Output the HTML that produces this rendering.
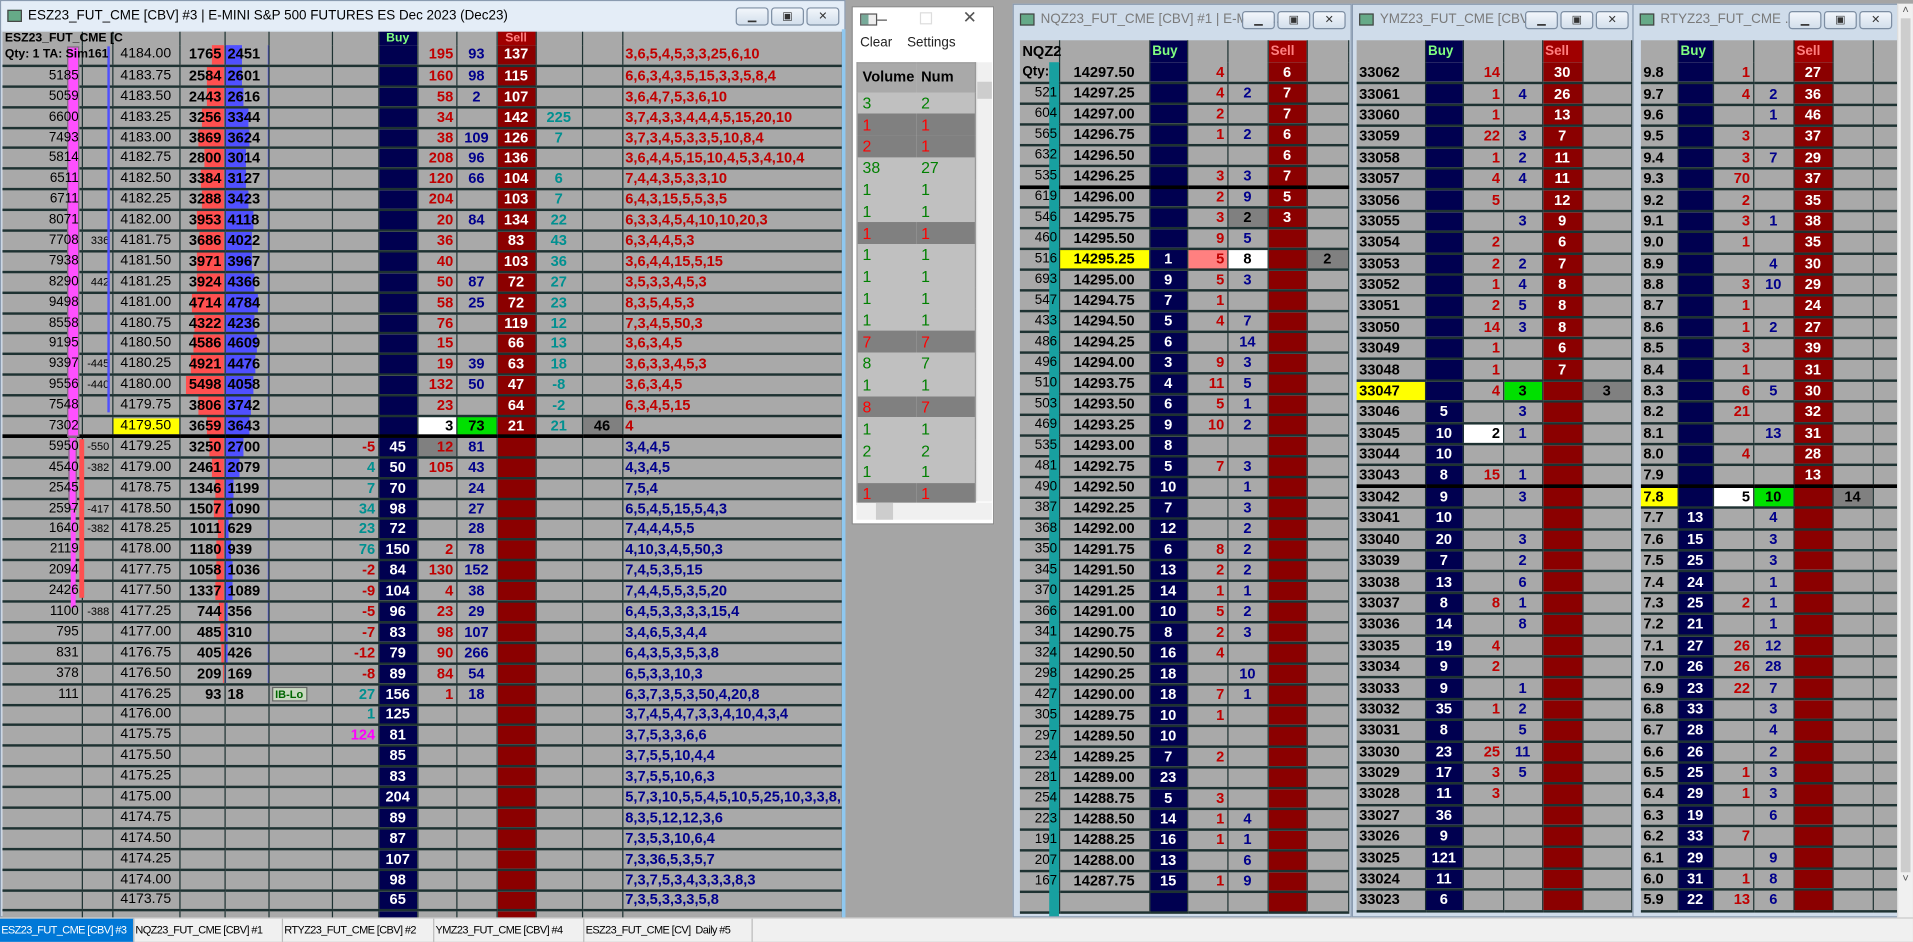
<!DOCTYPE html>
<html><head><meta charset="utf-8"><style>
*{box-sizing:border-box;margin:0;padding:0}
html,body{width:1913px;height:942px;overflow:hidden;background:#ababab}
#root{position:absolute;left:0;top:0;width:1568px;height:772px;transform:scale(1.22);transform-origin:0 0;background:#a5a5a5;font-family:"Liberation Sans",sans-serif}
.frame{position:absolute;background:#cfdcea;border:1px solid #8a9bb0}
.title{position:absolute;left:0;right:0;top:0;height:24px;font-size:11px;line-height:24px;padding-left:22px;white-space:nowrap;overflow:hidden;color:#7a7a7a}
.ico{position:absolute;left:5px;top:7px;width:12px;height:10px;background:#6a8;border:1px solid #444}
.btns{position:absolute;right:4px;top:5px;height:15px;display:flex;gap:2px}
.btns span{width:27px;height:15px;border:1px solid #7d8ea3;border-radius:3px;background:linear-gradient(#f2f6fb,#d3dfec);font-size:9px;text-align:center;line-height:13px;color:#333}
table{position:absolute;border-collapse:collapse;table-layout:fixed;font-weight:bold;font-size:12px;background:#a9a9a9}
td{border-right:1px solid #1e3232;border-bottom:2px solid #1e3232;padding:0 2px;white-space:nowrap;overflow:hidden;line-height:13px}
tr.h td{border-bottom:0}
.r{color:#c00000}.b{color:#00008b}.t{color:#009090}.m{color:#ff00ff}.k{color:#000}
.wc{background:#fff!important;color:#000!important}
.gc{background:#00e000!important;color:#000!important}
.dc{background:#808080!important;color:#000!important}
.pc{background:#ff8080!important}
.yc{background:#ffff00!important}
.thick td{border-bottom:3px solid #000}
.ov{overflow:visible!important;position:relative;z-index:3}
/* ES */
#es tr{height:16.9px}
#es tr.h{height:11px}
#es td:nth-child(1){text-align:right;font-size:11px;font-weight:normal;position:relative;z-index:3;overflow:visible}
#es td:nth-child(2){text-align:right;font-size:9px;font-weight:normal}
#es td:nth-child(3){text-align:center;font-weight:normal;font-size:11.5px}
#es td:nth-child(4){text-align:right;background:linear-gradient(to left,#ff5050 var(--a,0px),#a9a9a9 0)}
#es td:nth-child(5){text-align:left;background:linear-gradient(to right,#5050ff var(--b,0px),#a9a9a9 0)}
#es td:nth-child(7){text-align:right}
#es td:nth-child(8){text-align:center;background:#000050;color:#fff}
#es td:nth-child(9){text-align:right;color:#c00000}
#es td:nth-child(10){text-align:center;color:#00008b}
#es td:nth-child(11){text-align:center;background:#8b0000;color:#fff}
#es td:nth-child(12){text-align:center;color:#009090}
#es td:nth-child(13){text-align:center}
#es td:nth-child(14){text-align:left;color:#00008b}
#es tr.u td:nth-child(14){color:#c00000}
/* small DOMs */
.dm td:nth-child(1){text-align:right;font-size:11px;font-weight:normal}
#nq td:nth-child(1){position:relative;z-index:3;overflow:visible;padding-right:1px}
.dm td.p{text-align:center}
.dm td.bu{text-align:center;background:#000050;color:#fff}
.dm td.c3{text-align:right;color:#c00000}
.dm td.c4{text-align:center;color:#00008b}
.dm td.se{text-align:center;background:#8b0000;color:#fff}
.dm td.c6{text-align:center}
#nq tr{height:17px}#nq tr.h{height:18px}
#ym tr,#rt tr{height:17.4px}#ym tr.h,#rt tr.h{height:18px}
.hb{background:#000050!important;color:#80ff80!important;font-size:11px;vertical-align:middle}
.hs{background:#a00000!important;color:#ff8080!important;font-size:11px}
#ym td:nth-child(1),#rt td:nth-child(1){text-align:left;font-size:12px;font-weight:bold}
/* volume window */
#vw{position:absolute;left:698px;top:5px;width:117px;height:425px;background:#fff;border:1px solid #888}
#vt{position:absolute;left:3px;top:45px;width:98px;border:1px solid #999;font-weight:bold;font-size:12px;border-collapse:collapse;background:#c0c0c0}
#vt td{border:0;height:17.8px;padding:0 0 0 4px;font-weight:normal;font-size:13px}
#vt tr.d td{background:#808080;color:#ff0000}
#vt tr.g td{color:#008000}
#tabs{position:absolute;left:0;top:752px;width:1568px;height:20px;background:#f0f0f0;border-top:1px solid #ccc;font-size:9px;letter-spacing:-0.5px;white-space:nowrap}
#tabs span{position:absolute;top:0;height:19px;line-height:19px;padding-left:1px;border-right:1px solid #bbb;color:#000;overflow:hidden}
</style></head><body><div id="root">

<!-- ES window -->
<div class="frame" style="left:0;top:0;width:693px;height:752px;background:#dce7f3">
<div class="title" style="color:#000;background:#e4edf7"><div class="ico"></div>ESZ23_FUT_CME [CBV] #3 | E-MINI S&amp;P 500 FUTURES ES Dec 2023 (Dec23)</div>
<div class="btns"><span>▁</span><span>▣</span><span>✕</span></div>
</div>
<table id="es" style="left:2px;top:26px;width:688px">
<colgroup><col style="width:65px"><col style="width:25px"><col style="width:55px"><col style="width:37px"><col style="width:36px"><col style="width:52px"><col style="width:38px"><col style="width:32px"><col style="width:32px"><col style="width:33px"><col style="width:32px"><col style="width:38px"><col style="width:33px"><col style="width:180px"></colgroup>
<tr class="h"><td style="text-align:left;font-size:10px;font-weight:bold;line-height:10px;overflow:visible">ESZ23_FUT_CME [C</td><td></td><td></td><td></td><td></td><td></td><td></td><td class="hb" style="font-size:10px;line-height:10px">Buy</td><td></td><td></td><td class="hs" style="font-size:10px;line-height:10px">Sell</td><td></td><td></td><td></td></tr>
<tr class="u" style="--a:10px;--b:14px"><td style="text-align:left;font-size:10px;font-weight:bold">Qty: 1 TA: Sim161</td><td></td><td>4184.00</td><td>1765</td><td>2451</td><td></td><td></td><td></td><td>195</td><td>93</td><td>137</td><td></td><td></td><td>3,6,5,4,5,3,3,25,6,10</td></tr>
<tr class="u" style="--a:14px;--b:14px"><td>5185</td><td></td><td>4183.75</td><td>2584</td><td>2601</td><td></td><td></td><td></td><td>160</td><td>98</td><td>115</td><td></td><td></td><td>6,6,3,4,3,5,15,3,3,5,8,4</td></tr>
<tr class="u" style="--a:14px;--b:15px"><td>5059</td><td></td><td>4183.50</td><td>2443</td><td>2616</td><td></td><td></td><td></td><td>58</td><td>2</td><td>107</td><td></td><td></td><td>3,6,4,7,5,3,6,10</td></tr>
<tr class="u" style="--a:18px;--b:19px"><td>6600</td><td></td><td>4183.25</td><td>3256</td><td>3344</td><td></td><td></td><td></td><td>34</td><td></td><td>142</td><td class="m">225</td><td></td><td>3,7,4,3,3,4,4,4,5,15,20,10</td></tr>
<tr class="u" style="--a:21px;--b:20px"><td>7493</td><td></td><td>4183.00</td><td>3869</td><td>3624</td><td></td><td></td><td></td><td>38</td><td>109</td><td>126</td><td>7</td><td></td><td>3,7,3,4,5,3,3,5,10,8,4</td></tr>
<tr class="u" style="--a:16px;--b:17px"><td>5814</td><td></td><td>4182.75</td><td>2800</td><td>3014</td><td></td><td></td><td></td><td>208</td><td>96</td><td>136</td><td></td><td></td><td>3,6,4,4,5,15,10,4,5,3,4,10,4</td></tr>
<tr class="u" style="--a:19px;--b:17px"><td>6511</td><td></td><td>4182.50</td><td>3384</td><td>3127</td><td></td><td></td><td></td><td>120</td><td>66</td><td>104</td><td>6</td><td></td><td>7,4,4,3,5,3,3,10</td></tr>
<tr class="u" style="--a:18px;--b:19px"><td>6711</td><td></td><td>4182.25</td><td>3288</td><td>3423</td><td></td><td></td><td></td><td>204</td><td></td><td>103</td><td>7</td><td></td><td>6,4,3,15,5,5,3,5</td></tr>
<tr class="u" style="--a:22px;--b:23px"><td>8071</td><td></td><td>4182.00</td><td>3953</td><td>4118</td><td></td><td></td><td></td><td>20</td><td>84</td><td>134</td><td>22</td><td></td><td>6,3,3,4,5,4,10,10,20,3</td></tr>
<tr class="u" style="--a:20px;--b:22px"><td>7708</td><td>336</td><td>4181.75</td><td>3686</td><td>4022</td><td></td><td></td><td></td><td>36</td><td></td><td>83</td><td>43</td><td></td><td>6,3,4,4,5,3</td></tr>
<tr class="u" style="--a:22px;--b:22px"><td>7938</td><td></td><td>4181.50</td><td>3971</td><td>3967</td><td></td><td></td><td></td><td>40</td><td></td><td>103</td><td>36</td><td></td><td>3,6,4,4,15,5,15</td></tr>
<tr class="u" style="--a:22px;--b:24px"><td>8290</td><td>442</td><td>4181.25</td><td>3924</td><td>4366</td><td></td><td></td><td></td><td>50</td><td>87</td><td>72</td><td>27</td><td></td><td>3,5,3,3,4,5,3</td></tr>
<tr class="u" style="--a:26px;--b:27px"><td>9498</td><td></td><td>4181.00</td><td>4714</td><td>4784</td><td></td><td></td><td></td><td>58</td><td>25</td><td>72</td><td>23</td><td></td><td>8,3,5,4,5,3</td></tr>
<tr class="u" style="--a:24px;--b:24px"><td>8558</td><td></td><td>4180.75</td><td>4322</td><td>4236</td><td></td><td></td><td></td><td>76</td><td></td><td>119</td><td>12</td><td></td><td>7,3,4,5,50,3</td></tr>
<tr class="u" style="--a:25px;--b:26px"><td>9195</td><td></td><td>4180.50</td><td>4586</td><td>4609</td><td></td><td></td><td></td><td>15</td><td></td><td>66</td><td>13</td><td></td><td>3,6,3,4,5</td></tr>
<tr class="u" style="--a:27px;--b:25px"><td>9397</td><td>-445</td><td>4180.25</td><td>4921</td><td>4476</td><td></td><td></td><td></td><td>19</td><td>39</td><td>63</td><td>18</td><td></td><td>3,6,3,3,4,5,3</td></tr>
<tr class="u" style="--a:31px;--b:23px"><td>9556</td><td>-440</td><td>4180.00</td><td>5498</td><td>4058</td><td></td><td></td><td></td><td>132</td><td>50</td><td>47</td><td class="r">-8</td><td></td><td>3,6,3,4,5</td></tr>
<tr class="u" style="--a:21px;--b:21px"><td>7548</td><td></td><td>4179.75</td><td>3806</td><td>3742</td><td></td><td></td><td></td><td>23</td><td></td><td>64</td><td class="r">-2</td><td></td><td>6,3,4,5,15</td></tr>
<tr class="u thick" style="--a:14px;--b:20px"><td>7302</td><td></td><td><span style="display:block;background:#ff0;margin:0 -2px">4179.50</span></td><td>3659</td><td>3643</td><td></td><td></td><td></td><td class="wc">3</td><td class="gc">73</td><td>21</td><td>21</td><td class="dc">46</td><td>4</td></tr>
<tr style="--a:12px;--b:15px"><td>5950</td><td>-550</td><td>4179.25</td><td>3250</td><td>2700</td><td></td><td class="r">-5</td><td>45</td><td class="dc" style="color:#c00000!important">12</td><td>81</td><td></td><td></td><td></td><td>3,4,4,5</td></tr>
<tr style="--a:10px;--b:12px"><td>4540</td><td>-382</td><td>4179.00</td><td>2461</td><td>2079</td><td></td><td class="t">4</td><td>50</td><td>105</td><td>43</td><td></td><td></td><td></td><td>4,3,4,5</td></tr>
<tr style="--a:7px;--b:7px"><td>2545</td><td></td><td>4178.75</td><td>1346</td><td>1199</td><td></td><td class="t">7</td><td>70</td><td></td><td>24</td><td></td><td></td><td></td><td>7,5,4</td></tr>
<tr style="--a:8px;--b:6px"><td>2597</td><td>-417</td><td>4178.50</td><td>1507</td><td>1090</td><td></td><td class="t">34</td><td>98</td><td></td><td>27</td><td></td><td></td><td></td><td>6,5,4,5,15,5,4,3</td></tr>
<tr style="--a:5px;--b:3px"><td>1640</td><td>-382</td><td>4178.25</td><td>1011</td><td>629</td><td></td><td class="t">23</td><td>72</td><td></td><td>28</td><td></td><td></td><td></td><td>7,4,4,4,5,5</td></tr>
<tr style="--a:6px;--b:5px"><td>2119</td><td></td><td>4178.00</td><td>1180</td><td>939</td><td></td><td class="t">76</td><td>150</td><td>2</td><td>78</td><td></td><td></td><td></td><td>4,10,3,4,5,50,3</td></tr>
<tr style="--a:6px;--b:6px"><td>2094</td><td></td><td>4177.75</td><td>1058</td><td>1036</td><td></td><td class="r">-2</td><td>84</td><td>130</td><td>152</td><td></td><td></td><td></td><td>7,4,5,3,5,15</td></tr>
<tr style="--a:7px;--b:6px"><td>2426</td><td></td><td>4177.50</td><td>1337</td><td>1089</td><td></td><td class="r">-9</td><td>104</td><td>4</td><td>38</td><td></td><td></td><td></td><td>7,4,4,5,5,3,5,20</td></tr>
<tr style="--a:4px;--b:2px"><td>1100</td><td>-388</td><td>4177.25</td><td>744</td><td>356</td><td></td><td class="r">-5</td><td>96</td><td>23</td><td>29</td><td></td><td></td><td></td><td>6,4,5,3,3,3,3,15,4</td></tr>
<tr style="--a:3px;--b:2px"><td>795</td><td></td><td>4177.00</td><td>485</td><td>310</td><td></td><td class="r">-7</td><td>83</td><td>98</td><td>107</td><td></td><td></td><td></td><td>3,4,6,5,3,4,4</td></tr>
<tr style="--a:2px;--b:2px"><td>831</td><td></td><td>4176.75</td><td>405</td><td>426</td><td></td><td class="r">-12</td><td>79</td><td>90</td><td>266</td><td></td><td></td><td></td><td>6,4,3,5,3,5,3,8</td></tr>
<tr style="--a:1px;--b:1px"><td>378</td><td></td><td>4176.50</td><td>209</td><td>169</td><td></td><td class="r">-8</td><td>89</td><td>84</td><td>54</td><td></td><td></td><td></td><td>6,5,3,3,10,3</td></tr>
<tr><td>111</td><td></td><td>4176.25</td><td>93</td><td>18</td><td><span style="font-size:9px;color:#060;background:#c8d8c0;border:1px solid #666;padding:0 2px">IB-Lo</span></td><td class="t">27</td><td>156</td><td>1</td><td>18</td><td></td><td></td><td></td><td>6,3,7,3,5,3,50,4,20,8</td></tr>
<tr><td></td><td></td><td>4176.00</td><td></td><td></td><td></td><td class="t">1</td><td>125</td><td></td><td></td><td></td><td></td><td></td><td>3,7,4,5,4,7,3,3,4,10,4,3,4</td></tr>
<tr><td></td><td></td><td>4175.75</td><td></td><td></td><td></td><td class="m">124</td><td>81</td><td></td><td></td><td></td><td></td><td></td><td>3,7,5,3,3,6,6</td></tr>
<tr><td></td><td></td><td>4175.50</td><td></td><td></td><td></td><td></td><td>85</td><td></td><td></td><td></td><td></td><td></td><td>3,7,5,5,10,4,4</td></tr>
<tr><td></td><td></td><td>4175.25</td><td></td><td></td><td></td><td></td><td>83</td><td></td><td></td><td></td><td></td><td></td><td>3,7,5,5,10,6,3</td></tr>
<tr><td></td><td></td><td>4175.00</td><td></td><td></td><td></td><td></td><td>204</td><td></td><td></td><td></td><td></td><td></td><td>5,7,3,10,5,5,4,5,10,5,25,10,3,3,8,</td></tr>
<tr><td></td><td></td><td>4174.75</td><td></td><td></td><td></td><td></td><td>89</td><td></td><td></td><td></td><td></td><td></td><td>8,3,5,12,12,3,6</td></tr>
<tr><td></td><td></td><td>4174.50</td><td></td><td></td><td></td><td></td><td>87</td><td></td><td></td><td></td><td></td><td></td><td>7,3,5,3,10,6,4</td></tr>
<tr><td></td><td></td><td>4174.25</td><td></td><td></td><td></td><td></td><td>107</td><td></td><td></td><td></td><td></td><td></td><td>7,3,36,5,3,5,7</td></tr>
<tr><td></td><td></td><td>4174.00</td><td></td><td></td><td></td><td></td><td>98</td><td></td><td></td><td></td><td></td><td></td><td>7,3,7,5,3,4,3,3,3,8,3</td></tr>
<tr><td></td><td></td><td>4173.75</td><td></td><td></td><td></td><td></td><td>65</td><td></td><td></td><td></td><td></td><td></td><td>7,3,5,3,3,3,5,8</td></tr>
<tr><td></td><td></td><td></td><td></td><td></td><td></td><td></td><td></td><td></td><td></td><td></td><td></td><td></td><td></td></tr>
</table>
<!-- ES overlays -->
<div style="position:absolute;z-index:1;left:55px;top:38px;width:10px;height:320px;background:#ff50ff;border:1px solid #777"></div>
<div style="position:absolute;z-index:1;left:56px;top:358px;width:7px;height:60px;background:#ff50ff;border:1px solid #777"></div>
<div style="position:absolute;z-index:1;left:58px;top:418px;width:4px;height:80px;background:#ff50ff"></div>
<div style="position:absolute;z-index:1;left:65px;top:360px;width:4px;height:130px;background:#ff5050"></div>
<div style="position:absolute;z-index:1;left:88px;top:38px;width:2px;height:300px;background:#5050ff"></div>
<div style="position:absolute;left:690px;top:24px;width:3px;height:728px;background:#8fc8f0"></div>

<!-- Volume window -->
<div id="vw">
<div style="position:absolute;left:6px;top:5px;width:14px;height:10px;border:1px solid #555;background:linear-gradient(90deg,#7a9 50%,#eee 50%)"></div>
<div style="position:absolute;left:20px;top:10px;width:8px;height:1px;background:#555"></div>
<div style="position:absolute;left:55px;top:4px;width:10px;height:10px;border:1px solid #ddd"></div>
<div style="position:absolute;left:90px;top:0px;font-size:14px;color:#555">✕</div>
<div style="position:absolute;left:6px;top:23px;font-size:11px;color:#222">Clear &nbsp;&nbsp; Settings</div>
<table id="vt">
<tr style="background:#a9a9a9"><td style="font-weight:bold;height:24px;color:#000;font-size:12px">Volume</td><td style="font-weight:bold;color:#000;font-size:12px">Num</td></tr>
<tr class="g"><td>3</td><td>2</td></tr>
<tr class="d"><td>1</td><td>1</td></tr>
<tr class="d"><td>2</td><td>1</td></tr>
<tr class="g"><td>38</td><td>27</td></tr>
<tr class="g"><td>1</td><td>1</td></tr>
<tr class="g"><td>1</td><td>1</td></tr>
<tr class="d"><td>1</td><td>1</td></tr>
<tr class="g"><td>1</td><td>1</td></tr>
<tr class="g"><td>1</td><td>1</td></tr>
<tr class="g"><td>1</td><td>1</td></tr>
<tr class="g"><td>1</td><td>1</td></tr>
<tr class="d"><td>7</td><td>7</td></tr>
<tr class="g"><td>8</td><td>7</td></tr>
<tr class="g"><td>1</td><td>1</td></tr>
<tr class="d"><td>8</td><td>7</td></tr>
<tr class="g"><td>1</td><td>1</td></tr>
<tr class="g"><td>2</td><td>2</td></tr>
<tr class="g"><td>1</td><td>1</td></tr>
<tr class="d"><td>1</td><td>1</td></tr>
</table>
<div style="position:absolute;left:101px;top:45px;width:13px;height:360px;background:#f0f0f0;border-left:1px solid #ddd"><div style="margin-top:16px;height:14px;background:#cdcdcd"></div></div>
<div style="position:absolute;left:3px;top:406px;width:111px;height:14px;background:#f0f0f0"><div style="margin-left:16px;width:14px;height:14px;background:#cdcdcd"></div></div>
</div>

<!-- NQ window -->
<div class="frame" style="left:830px;top:3px;width:278px;height:749px">
<div class="title"><div class="ico"></div>NQZ23_FUT_CME [CBV] #1 | E-MINI ...</div>
<div class="btns"><span>▁</span><span>▣</span><span>✕</span></div>
</div>
<table id="nq" class="dm" style="left:836px;top:33px;width:269px">
<colgroup><col style="width:32px"><col style="width:74px"><col style="width:31px"><col style="width:33px"><col style="width:33px"><col style="width:32px"><col style="width:34px"></colgroup>
<tr class="h"><td style="text-align:left;font-weight:bold;font-size:12px">NQZ2</td><td></td><td class="hb">Buy</td><td></td><td></td><td class="hs">Sell</td><td></td></tr>
<tr><td style="text-align:left;font-weight:bold">Qty:</td><td class="p">14297.50</td><td class="bu"></td><td class="c3">4</td><td class="c4"></td><td class="se">6</td><td></td></tr>
<tr><td>521</td><td class="p">14297.25</td><td class="bu"></td><td class="c3">4</td><td class="c4">2</td><td class="se">7</td><td></td></tr>
<tr><td>604</td><td class="p">14297.00</td><td class="bu"></td><td class="c3">2</td><td class="c4"></td><td class="se">7</td><td></td></tr>
<tr><td>565</td><td class="p">14296.75</td><td class="bu"></td><td class="c3">1</td><td class="c4">2</td><td class="se">6</td><td></td></tr>
<tr><td>632</td><td class="p">14296.50</td><td class="bu"></td><td class="c3"></td><td class="c4"></td><td class="se">6</td><td></td></tr>
<tr class="thick"><td>535</td><td class="p">14296.25</td><td class="bu"></td><td class="c3">3</td><td class="c4">3</td><td class="se">7</td><td></td></tr>
<tr><td>619</td><td class="p">14296.00</td><td class="bu"></td><td class="c3">2</td><td class="c4">9</td><td class="se">5</td><td></td></tr>
<tr><td>546</td><td class="p">14295.75</td><td class="bu"></td><td class="c3">3</td><td class="c4 dc">2</td><td class="se">3</td><td></td></tr>
<tr><td>460</td><td class="p">14295.50</td><td class="bu"></td><td class="c3">9</td><td class="c4">5</td><td class="se"></td><td></td></tr>
<tr><td>516</td><td class="p yc">14295.25</td><td class="bu">1</td><td class="c3 pc">5</td><td class="c4 wc">8</td><td class="se"></td><td class="dc c6">2</td></tr>
<tr><td>693</td><td class="p">14295.00</td><td class="bu">9</td><td class="c3">5</td><td class="c4">3</td><td class="se"></td><td></td></tr>
<tr><td>547</td><td class="p">14294.75</td><td class="bu">7</td><td class="c3">1</td><td class="c4"></td><td class="se"></td><td></td></tr>
<tr><td>433</td><td class="p">14294.50</td><td class="bu">5</td><td class="c3">4</td><td class="c4">7</td><td class="se"></td><td></td></tr>
<tr><td>486</td><td class="p">14294.25</td><td class="bu">6</td><td class="c3"></td><td class="c4">14</td><td class="se"></td><td></td></tr>
<tr><td>496</td><td class="p">14294.00</td><td class="bu">3</td><td class="c3">9</td><td class="c4">3</td><td class="se"></td><td></td></tr>
<tr><td>510</td><td class="p">14293.75</td><td class="bu">4</td><td class="c3">11</td><td class="c4">5</td><td class="se"></td><td></td></tr>
<tr><td>503</td><td class="p">14293.50</td><td class="bu">6</td><td class="c3">5</td><td class="c4">1</td><td class="se"></td><td></td></tr>
<tr><td>469</td><td class="p">14293.25</td><td class="bu">9</td><td class="c3">10</td><td class="c4">2</td><td class="se"></td><td></td></tr>
<tr><td>535</td><td class="p">14293.00</td><td class="bu">8</td><td class="c3"></td><td class="c4"></td><td class="se"></td><td></td></tr>
<tr><td>481</td><td class="p">14292.75</td><td class="bu">5</td><td class="c3">7</td><td class="c4">3</td><td class="se"></td><td></td></tr>
<tr><td>490</td><td class="p">14292.50</td><td class="bu">10</td><td class="c3"></td><td class="c4">1</td><td class="se"></td><td></td></tr>
<tr><td>387</td><td class="p">14292.25</td><td class="bu">7</td><td class="c3"></td><td class="c4">3</td><td class="se"></td><td></td></tr>
<tr><td>368</td><td class="p">14292.00</td><td class="bu">12</td><td class="c3"></td><td class="c4">2</td><td class="se"></td><td></td></tr>
<tr><td>350</td><td class="p">14291.75</td><td class="bu">6</td><td class="c3">8</td><td class="c4">2</td><td class="se"></td><td></td></tr>
<tr><td>345</td><td class="p">14291.50</td><td class="bu">13</td><td class="c3">2</td><td class="c4">2</td><td class="se"></td><td></td></tr>
<tr><td>370</td><td class="p">14291.25</td><td class="bu">14</td><td class="c3">1</td><td class="c4">1</td><td class="se"></td><td></td></tr>
<tr><td>366</td><td class="p">14291.00</td><td class="bu">10</td><td class="c3">5</td><td class="c4">2</td><td class="se"></td><td></td></tr>
<tr><td>341</td><td class="p">14290.75</td><td class="bu">8</td><td class="c3">2</td><td class="c4">3</td><td class="se"></td><td></td></tr>
<tr><td>324</td><td class="p">14290.50</td><td class="bu">16</td><td class="c3">4</td><td class="c4"></td><td class="se"></td><td></td></tr>
<tr><td>298</td><td class="p">14290.25</td><td class="bu">18</td><td class="c3"></td><td class="c4">10</td><td class="se"></td><td></td></tr>
<tr><td>427</td><td class="p">14290.00</td><td class="bu">18</td><td class="c3">7</td><td class="c4">1</td><td class="se"></td><td></td></tr>
<tr><td>305</td><td class="p">14289.75</td><td class="bu">10</td><td class="c3">1</td><td class="c4"></td><td class="se"></td><td></td></tr>
<tr><td>297</td><td class="p">14289.50</td><td class="bu">10</td><td class="c3"></td><td class="c4"></td><td class="se"></td><td></td></tr>
<tr><td>234</td><td class="p">14289.25</td><td class="bu">7</td><td class="c3">2</td><td class="c4"></td><td class="se"></td><td></td></tr>
<tr><td>281</td><td class="p">14289.00</td><td class="bu">23</td><td class="c3"></td><td class="c4"></td><td class="se"></td><td></td></tr>
<tr><td>254</td><td class="p">14288.75</td><td class="bu">5</td><td class="c3">3</td><td class="c4"></td><td class="se"></td><td></td></tr>
<tr><td>223</td><td class="p">14288.50</td><td class="bu">14</td><td class="c3">1</td><td class="c4">4</td><td class="se"></td><td></td></tr>
<tr><td>191</td><td class="p">14288.25</td><td class="bu">16</td><td class="c3">1</td><td class="c4">1</td><td class="se"></td><td></td></tr>
<tr><td>207</td><td class="p">14288.00</td><td class="bu">13</td><td class="c3"></td><td class="c4">6</td><td class="se"></td><td></td></tr>
<tr><td>167</td><td class="p">14287.75</td><td class="bu">15</td><td class="c3">1</td><td class="c4">9</td><td class="se"></td><td></td></tr>
<tr><td></td><td class="p"></td><td class="bu"></td><td></td><td></td><td class="se"></td><td></td></tr>
</table>
<div style="position:absolute;z-index:1;left:860px;top:51px;width:8px;height:700px;background:#18a0a0"></div>

<!-- YM window -->
<div class="frame" style="left:1108px;top:3px;width:232px;height:749px">
<div class="title"><div class="ico"></div>YMZ23_FUT_CME [CBV]...</div>
<div class="btns"><span>▁</span><span>▣</span><span>✕</span></div>
</div>
<table id="ym" class="dm" style="left:1112px;top:33px;width:225px">
<colgroup><col style="width:56px"><col style="width:31px"><col style="width:33px"><col style="width:32px"><col style="width:33px"><col style="width:40px"></colgroup>
<tr class="h"><td></td><td class="hb">Buy</td><td></td><td></td><td class="hs">Sell</td><td></td></tr>
<tr><td>33062</td><td class="bu"></td><td class="c3">14</td><td class="c4"></td><td class="se">30</td><td></td></tr>
<tr><td>33061</td><td class="bu"></td><td class="c3">1</td><td class="c4">4</td><td class="se">26</td><td></td></tr>
<tr><td>33060</td><td class="bu"></td><td class="c3">1</td><td class="c4"></td><td class="se">13</td><td></td></tr>
<tr><td>33059</td><td class="bu"></td><td class="c3">22</td><td class="c4">3</td><td class="se">7</td><td></td></tr>
<tr><td>33058</td><td class="bu"></td><td class="c3">1</td><td class="c4">2</td><td class="se">11</td><td></td></tr>
<tr><td>33057</td><td class="bu"></td><td class="c3">4</td><td class="c4">4</td><td class="se">11</td><td></td></tr>
<tr><td>33056</td><td class="bu"></td><td class="c3">5</td><td class="c4"></td><td class="se">12</td><td></td></tr>
<tr><td>33055</td><td class="bu"></td><td class="c3"></td><td class="c4">3</td><td class="se">9</td><td></td></tr>
<tr><td>33054</td><td class="bu"></td><td class="c3">2</td><td class="c4"></td><td class="se">6</td><td></td></tr>
<tr><td>33053</td><td class="bu"></td><td class="c3">2</td><td class="c4">2</td><td class="se">7</td><td></td></tr>
<tr><td>33052</td><td class="bu"></td><td class="c3">1</td><td class="c4">4</td><td class="se">8</td><td></td></tr>
<tr><td>33051</td><td class="bu"></td><td class="c3">2</td><td class="c4">5</td><td class="se">8</td><td></td></tr>
<tr><td>33050</td><td class="bu"></td><td class="c3">14</td><td class="c4">3</td><td class="se">8</td><td></td></tr>
<tr><td>33049</td><td class="bu"></td><td class="c3">1</td><td class="c4"></td><td class="se">6</td><td></td></tr>
<tr><td>33048</td><td class="bu"></td><td class="c3">1</td><td class="c4"></td><td class="se">7</td><td></td></tr>
<tr><td class="yc">33047</td><td class="bu"></td><td class="c3">4</td><td class="c4 gc">3</td><td class="se"></td><td class="dc c6">3</td></tr>
<tr><td>33046</td><td class="bu">5</td><td class="c3"></td><td class="c4">3</td><td class="se"></td><td></td></tr>
<tr><td>33045</td><td class="bu">10</td><td class="c3 wc">2</td><td class="c4">1</td><td class="se"></td><td></td></tr>
<tr><td>33044</td><td class="bu">10</td><td class="c3"></td><td class="c4"></td><td class="se"></td><td></td></tr>
<tr class="thick"><td>33043</td><td class="bu">8</td><td class="c3">15</td><td class="c4">1</td><td class="se"></td><td></td></tr>
<tr><td>33042</td><td class="bu">9</td><td class="c3"></td><td class="c4">3</td><td class="se"></td><td></td></tr>
<tr><td>33041</td><td class="bu">10</td><td class="c3"></td><td class="c4"></td><td class="se"></td><td></td></tr>
<tr><td>33040</td><td class="bu">20</td><td class="c3"></td><td class="c4">3</td><td class="se"></td><td></td></tr>
<tr><td>33039</td><td class="bu">7</td><td class="c3"></td><td class="c4">2</td><td class="se"></td><td></td></tr>
<tr><td>33038</td><td class="bu">13</td><td class="c3"></td><td class="c4">6</td><td class="se"></td><td></td></tr>
<tr><td>33037</td><td class="bu">8</td><td class="c3">8</td><td class="c4">1</td><td class="se"></td><td></td></tr>
<tr><td>33036</td><td class="bu">14</td><td class="c3"></td><td class="c4">8</td><td class="se"></td><td></td></tr>
<tr><td>33035</td><td class="bu">19</td><td class="c3">4</td><td class="c4"></td><td class="se"></td><td></td></tr>
<tr><td>33034</td><td class="bu">9</td><td class="c3">2</td><td class="c4"></td><td class="se"></td><td></td></tr>
<tr><td>33033</td><td class="bu">9</td><td class="c3"></td><td class="c4">1</td><td class="se"></td><td></td></tr>
<tr><td>33032</td><td class="bu">35</td><td class="c3">1</td><td class="c4">2</td><td class="se"></td><td></td></tr>
<tr><td>33031</td><td class="bu">8</td><td class="c3"></td><td class="c4">5</td><td class="se"></td><td></td></tr>
<tr><td>33030</td><td class="bu">23</td><td class="c3">25</td><td class="c4">11</td><td class="se"></td><td></td></tr>
<tr><td>33029</td><td class="bu">17</td><td class="c3">3</td><td class="c4">5</td><td class="se"></td><td></td></tr>
<tr><td>33028</td><td class="bu">11</td><td class="c3">3</td><td class="c4"></td><td class="se"></td><td></td></tr>
<tr><td>33027</td><td class="bu">36</td><td class="c3"></td><td class="c4"></td><td class="se"></td><td></td></tr>
<tr><td>33026</td><td class="bu">9</td><td class="c3"></td><td class="c4"></td><td class="se"></td><td></td></tr>
<tr><td>33025</td><td class="bu">121</td><td class="c3"></td><td class="c4"></td><td class="se"></td><td></td></tr>
<tr><td>33024</td><td class="bu">11</td><td class="c3"></td><td class="c4"></td><td class="se"></td><td></td></tr>
<tr><td>33023</td><td class="bu">6</td><td class="c3"></td><td class="c4"></td><td class="se"></td><td></td></tr>
</table>

<!-- RTY window -->
<div class="frame" style="left:1338px;top:3px;width:218px;height:749px">
<div class="title"><div class="ico"></div>RTYZ23_FUT_CME ...</div>
<div class="btns"><span>▁</span><span>▣</span><span>✕</span></div>
</div>
<table id="rt" class="dm" style="left:1345px;top:33px;width:210px">
<colgroup><col style="width:30px"><col style="width:29px"><col style="width:33px"><col style="width:33px"><col style="width:32px"><col style="width:33px"><col style="width:20px"></colgroup>
<tr class="h"><td></td><td class="hb">Buy</td><td></td><td></td><td class="hs">Sell</td><td></td><td></td></tr>
<tr><td>9.8</td><td class="bu"></td><td class="c3">1</td><td class="c4"></td><td class="se">27</td><td></td><td></td></tr>
<tr><td>9.7</td><td class="bu"></td><td class="c3">4</td><td class="c4">2</td><td class="se">36</td><td></td><td></td></tr>
<tr><td>9.6</td><td class="bu"></td><td class="c3"></td><td class="c4">1</td><td class="se">46</td><td></td><td></td></tr>
<tr><td>9.5</td><td class="bu"></td><td class="c3">3</td><td class="c4"></td><td class="se">37</td><td></td><td></td></tr>
<tr><td>9.4</td><td class="bu"></td><td class="c3">3</td><td class="c4">7</td><td class="se">29</td><td></td><td></td></tr>
<tr><td>9.3</td><td class="bu"></td><td class="c3">70</td><td class="c4"></td><td class="se">37</td><td></td><td></td></tr>
<tr><td>9.2</td><td class="bu"></td><td class="c3">2</td><td class="c4"></td><td class="se">35</td><td></td><td></td></tr>
<tr><td>9.1</td><td class="bu"></td><td class="c3">3</td><td class="c4">1</td><td class="se">38</td><td></td><td></td></tr>
<tr><td>9.0</td><td class="bu"></td><td class="c3">1</td><td class="c4"></td><td class="se">35</td><td></td><td></td></tr>
<tr><td>8.9</td><td class="bu"></td><td class="c3"></td><td class="c4">4</td><td class="se">30</td><td></td><td></td></tr>
<tr><td>8.8</td><td class="bu"></td><td class="c3">3</td><td class="c4">10</td><td class="se">29</td><td></td><td></td></tr>
<tr><td>8.7</td><td class="bu"></td><td class="c3">1</td><td class="c4"></td><td class="se">24</td><td></td><td></td></tr>
<tr><td>8.6</td><td class="bu"></td><td class="c3">1</td><td class="c4">2</td><td class="se">27</td><td></td><td></td></tr>
<tr><td>8.5</td><td class="bu"></td><td class="c3">3</td><td class="c4"></td><td class="se">39</td><td></td><td></td></tr>
<tr><td>8.4</td><td class="bu"></td><td class="c3">1</td><td class="c4"></td><td class="se">31</td><td></td><td></td></tr>
<tr><td>8.3</td><td class="bu"></td><td class="c3">6</td><td class="c4">5</td><td class="se">30</td><td></td><td></td></tr>
<tr><td>8.2</td><td class="bu"></td><td class="c3">21</td><td class="c4"></td><td class="se">32</td><td></td><td></td></tr>
<tr><td>8.1</td><td class="bu"></td><td class="c3"></td><td class="c4">13</td><td class="se">31</td><td></td><td></td></tr>
<tr><td>8.0</td><td class="bu"></td><td class="c3">4</td><td class="c4"></td><td class="se">28</td><td></td><td></td></tr>
<tr class="thick"><td>7.9</td><td class="bu"></td><td class="c3"></td><td class="c4"></td><td class="se">13</td><td></td><td></td></tr>
<tr><td class="yc">7.8</td><td class="bu"></td><td class="c3 wc">5</td><td class="c4 gc">10</td><td class="se"></td><td class="dc c6">14</td><td></td></tr>
<tr><td>7.7</td><td class="bu">13</td><td class="c3"></td><td class="c4">4</td><td class="se"></td><td></td><td></td></tr>
<tr><td>7.6</td><td class="bu">15</td><td class="c3"></td><td class="c4">3</td><td class="se"></td><td></td><td></td></tr>
<tr><td>7.5</td><td class="bu">25</td><td class="c3"></td><td class="c4">3</td><td class="se"></td><td></td><td></td></tr>
<tr><td>7.4</td><td class="bu">24</td><td class="c3"></td><td class="c4">1</td><td class="se"></td><td></td><td></td></tr>
<tr><td>7.3</td><td class="bu">25</td><td class="c3">2</td><td class="c4">1</td><td class="se"></td><td></td><td></td></tr>
<tr><td>7.2</td><td class="bu">21</td><td class="c3"></td><td class="c4">1</td><td class="se"></td><td></td><td></td></tr>
<tr><td>7.1</td><td class="bu">27</td><td class="c3">26</td><td class="c4">12</td><td class="se"></td><td></td><td></td></tr>
<tr><td>7.0</td><td class="bu">26</td><td class="c3">26</td><td class="c4">28</td><td class="se"></td><td></td><td></td></tr>
<tr><td>6.9</td><td class="bu">23</td><td class="c3">22</td><td class="c4">7</td><td class="se"></td><td></td><td></td></tr>
<tr><td>6.8</td><td class="bu">33</td><td class="c3"></td><td class="c4">3</td><td class="se"></td><td></td><td></td></tr>
<tr><td>6.7</td><td class="bu">28</td><td class="c3"></td><td class="c4">4</td><td class="se"></td><td></td><td></td></tr>
<tr><td>6.6</td><td class="bu">26</td><td class="c3"></td><td class="c4">2</td><td class="se"></td><td></td><td></td></tr>
<tr><td>6.5</td><td class="bu">25</td><td class="c3">1</td><td class="c4">3</td><td class="se"></td><td></td><td></td></tr>
<tr><td>6.4</td><td class="bu">29</td><td class="c3">1</td><td class="c4">3</td><td class="se"></td><td></td><td></td></tr>
<tr><td>6.3</td><td class="bu">19</td><td class="c3"></td><td class="c4">6</td><td class="se"></td><td></td><td></td></tr>
<tr><td>6.2</td><td class="bu">33</td><td class="c3">7</td><td class="c4"></td><td class="se"></td><td></td><td></td></tr>
<tr><td>6.1</td><td class="bu">29</td><td class="c3"></td><td class="c4">9</td><td class="se"></td><td></td><td></td></tr>
<tr><td>6.0</td><td class="bu">31</td><td class="c3">1</td><td class="c4">8</td><td class="se"></td><td></td><td></td></tr>
<tr><td>5.9</td><td class="bu">22</td><td class="c3">13</td><td class="c4">6</td><td class="se"></td><td></td><td></td></tr>
</table>
<div style="position:absolute;left:1555px;top:3px;width:13px;height:749px;background:#f0f0f0;border-left:1px solid #ddd;font-size:9px;color:#555;text-align:center">
<div>˄</div><div style="margin-top:2px;height:700px;background:#cdcdcd;margin-left:2px;margin-right:2px"></div><div>˅</div></div>

<!-- Tabs -->
<div id="tabs">
<span style="left:0;width:110px;background:#0078d7;color:#fff">ESZ23_FUT_CME [CBV] #3</span>
<span style="left:110px;width:122px">NQZ23_FUT_CME [CBV] #1</span>
<span style="left:232px;width:124px">RTYZ23_FUT_CME [CBV] #2</span>
<span style="left:356px;width:123px">YMZ23_FUT_CME [CBV] #4</span>
<span style="left:479px;width:138px">ESZ23_FUT_CME [CV]&nbsp; Daily #5</span>
</div>
</div></body></html>
